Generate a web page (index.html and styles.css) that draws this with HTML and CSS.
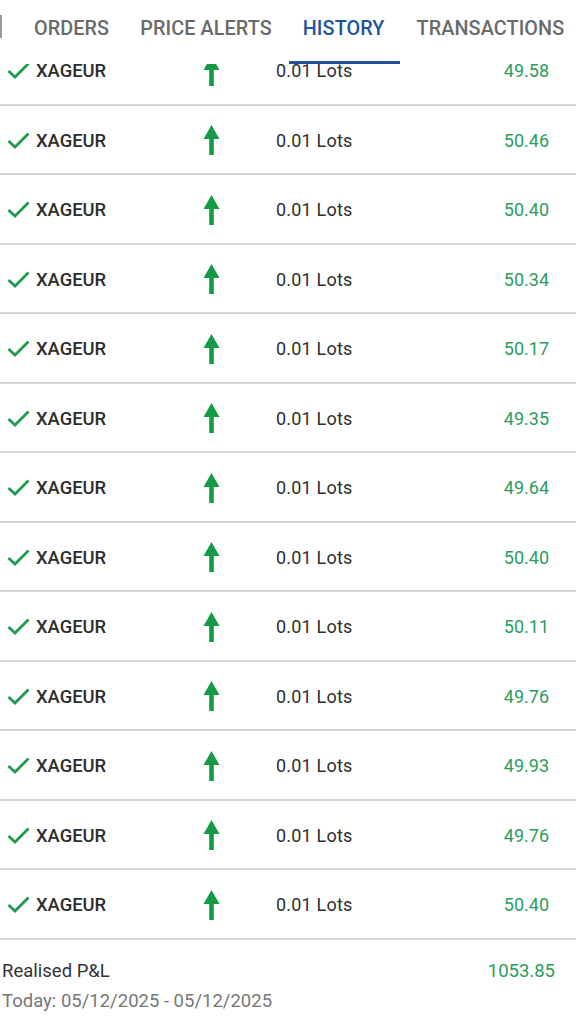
FILE: index.html
```html
<!DOCTYPE html>
<html lang="en">
<head>
    <meta charset="UTF-8">
    <title>History</title>
    <link rel="stylesheet" href="styles.css">
</head>
<body>
<div id="screen">
    <div id="tabs">
        <span class="edge"></span>
        <span class="tab t-orders">ORDERS</span>
        <span class="tab t-alerts">PRICE ALERTS</span>
        <span class="tab t-history selected">HISTORY</span>
        <span class="tab t-trans">TRANSACTIONS</span>
    </div>
    <div id="list">
        <div id="rows"></div>
    </div>
    <div id="footer">
        <div class="pl">
            <span>Realised P&amp;L</span>
            <span class="pl-value">1053.85</span>
        </div>
        <div class="range">Today: 05/12/2025 - 05/12/2025</div>
    </div>
</div>

<script>
    var values = ['49.58','50.46','50.40','50.34','50.17','49.35','49.64','50.40','50.11','49.76','49.93','49.76','50.40'];
    var oRows = document.getElementById('rows');
    var html = '';
    for (var i = 0; i < values.length; i++) {
        html += '<div class="row">' +
            '<svg class="check" width="23" height="17" viewBox="0 0 23 17"><path d="M1.5 9 L8 15 L21.5 1.5" fill="none" stroke="#1f9a4f" stroke-width="2.8"/></svg>' +
            '<span class="name">XAGEUR</span>' +
            '<svg class="arrow" width="17" height="30" viewBox="0 0 17 30"><path d="M8.5 0 L16.5 14 L10.8 14 L10.8 30 L6.2 30 L6.2 14 L0.5 14 Z" fill="#159a45"/></svg>' +
            '<span class="lots">0.01 Lots</span>' +
            '<span class="value">' + values[i] + '</span>' +
            '</div>';
    }
    oRows.innerHTML = html;
</script>
</body>
</html>
```

FILE: styles.css
```css
*{
    margin: 0;
    padding: 0;
    box-sizing: border-box;
}
body{
    background: #ffffff;
    font-family: Roboto, "Liberation Sans", sans-serif;
}
#screen{
    width: 576px;
    height: 1024px;
    overflow: hidden;
    display: flex;
    flex-direction: column;
}
#tabs{
    height: 64px;
    display: flex;
    align-items: stretch;
    background: #ffffff;
    position: relative;
    z-index: 2;
}
#tabs .edge{
    width: 2px;
    height: 23px;
    margin-top: 15px;
    background: #9a9a9a;
}
#tabs .tab{
    display: flex;
    align-items: center;
    padding-bottom: 4px;
    font-size: 19.8px;
    font-weight: 500;
    color: #6a6a6a;
    letter-spacing: 0.1px;
    white-space: nowrap;
    border-bottom: 3px solid transparent;
}
#tabs .t-orders{
    margin-left: 32px;
}
#tabs .t-alerts{
    margin-left: 31px;
}
#tabs .t-history{
    margin-left: 17px;
    padding-left: 14px;
    padding-right: 15px;
}
#tabs .t-trans{
    margin-left: 17px;
}
#tabs .selected{
    color: #24539c;
    border-bottom-color: #24539c;
}
#list{
    height: 876px;
    overflow: hidden;
    position: relative;
    z-index: 1;
}
#rows{
    margin-top: -28px;
}
.row{
    height: 69.5px;
    padding-top: 2px;
    display: flex;
    align-items: center;
    border-bottom: 2px solid #d6d6d6;
    font-size: 18px;
    color: #2e2e2e;
}
.row .check{
    margin-left: 7px;
    flex: none;
}
.row .name{
    margin-left: 6px;
    width: 167px;
    font-size: 18.4px;
    font-weight: 500;
}
.row .arrow{
    flex: none;
}
.row .lots{
    margin-left: 56px;
    letter-spacing: 0.2px;
}
.row .value{
    margin-left: auto;
    margin-right: 27px;
    color: #2c9d5c;
}
#footer{
    padding: 16px 21px 0 2px;
    font-size: 18.5px;
}
#footer .pl{
    display: flex;
    justify-content: space-between;
    color: #333333;
    height: 30px;
    align-items: center;
}
#footer .pl-value{
    color: #2c9d5c;
}
#footer .range{
    color: #777777;
    line-height: 30px;
}
```
